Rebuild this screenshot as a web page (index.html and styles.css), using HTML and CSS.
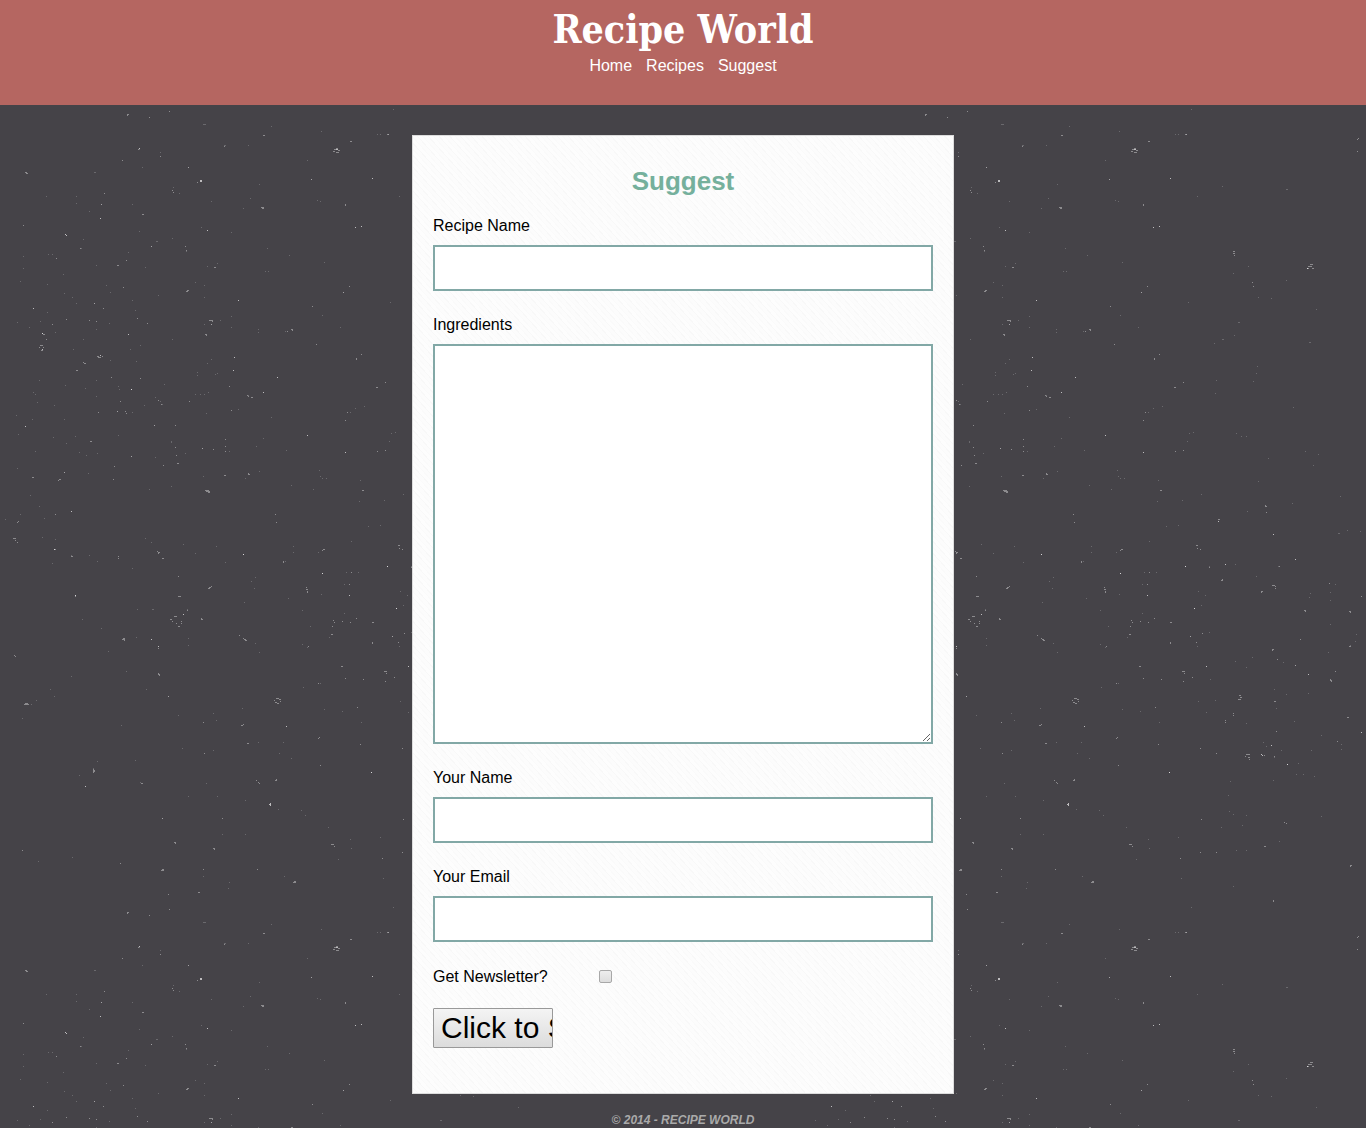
FILE: index.html
```html
<!DOCTYPE html>
<html lang="en">
<head>
<meta charset="utf-8">
<title>Recipe World - Suggest</title>
<link rel="stylesheet" href="styles.css">
</head>
<body>
<header class="site-header">
  <h1 class="logo">Recipe World</h1>
  <nav class="site-nav">
    <a href="#home">Home</a>
    <a href="#recipes">Recipes</a>
    <a href="#suggest">Suggest</a>
  </nav>
</header>
<main class="card">
  <h2 class="card-title">Suggest</h2>
  <form class="suggest-form">
    <div class="field">
      <label for="recipe">Recipe Name</label>
      <input class="box" type="text" id="recipe">
    </div>
    <div class="field">
      <label for="ingredients">Ingredients</label>
      <textarea class="box box-tall" id="ingredients"></textarea>
    </div>
    <div class="field">
      <label for="name">Your Name</label>
      <input class="box" type="text" id="name">
    </div>
    <div class="field">
      <label for="email">Your Email</label>
      <input class="box" type="email" id="email">
    </div>
    <div class="check-row">
      <label for="newsletter">Get Newsletter?</label>
      <input class="check" type="checkbox" id="newsletter">
    </div>
    <button class="submit" type="submit">Click to Submit</button>
  </form>
</main>
<footer class="site-footer">© 2014 - RECIPE WORLD</footer>
</body>
</html>
```
FILE: styles.css
```css
* { box-sizing: border-box; }

/* The page background is a 798px tile of dust specks: faint, medium and bright. */
body {
  margin: 0;
  font-family: Arial, "Liberation Sans", sans-serif;
  font-size: 16px;
  line-height: 18px;
  color: #000;
  background: #454348 url("data:image/svg+xml,%3Csvg xmlns='http://www.w3.org/2000/svg' width='798' height='798'%3E%3Cg fill='none' stroke='%23fff' transform='translate(0 .5)'%3E%3Cpath stroke-opacity='.2' d='M203 124h3M224 145h2M139 149h1M142 167h1M160 152h1M188 167h1M94 172h2M248 145h1M271 126h1M321 131h1M311 179h1M259 184h1M173 187h1M179 193h1M46 196h1M76 196h1M76 203h1M101 204h1M132 204h1M89 211h1M211 201h1M243 208h1M250 198h1M320 201h1M201 227h1M231 232h1M139 231h1M172 238h1M83 239h1M81 248h1M48 254h1M52 254h1M128 252h1M151 246h1M186 251h1M157 241h1M156 241h1M267 248h1M265 271h1M324 262h1M289 255h1M23 256h1M23 268h1M63 274h1M20 281h1M47 284h1M96 265h1M145 267h1M207 266h1M217 263h1M195 282h1M204 285h1M106 285h1M110 292h1M64 293h1M72 297h1M76 303h1M94 303h1M132 300h1M135 310h1M158 295h1M204 297h1M268 271h1M322 315h1M343 292h1M17 322h1M29 327h1M47 312h1M40 321h1M55 332h1M96 329h1M109 323h1M204 324h1M211 324h1M220 320h1M231 316h1M231 327h1M258 329h1M258 332h1M285 331h1M340 327h1M172 339h1M83 339h1M73 349h1M130 349h1M140 345h1M110 360h1M136 361h1M211 359h1M207 363h1M197 372h1M197 375h1M215 374h1M217 373h1M164 384h1M39 380h1M96 380h1M118 386h1M119 389h1M65 385h1M85 388h1M96 396h1M33 392h1M35 394h1M37 402h1M54 405h1M64 419h1M16 415h1M32 419h1M155 397h1M160 401h1M200 394h1M195 394h1M204 394h1M208 392h1M248 395h1M162 404h1M132 412h1M117 411h1M144 405h1M206 413h1M238 409h1M154 425h1M171 442h1M53 437h1M75 436h1M18 434h1M35 451h1M66 443h1M79 452h1M86 455h1M97 453h1M118 435h1M131 456h1M155 457h1M171 441h1M185 453h1M202 448h1M271 417h1M263 438h1M256 446h1M229 451h1M286 450h1M355 408h1M364 406h1M389 441h1M391 433h1M395 432h1M319 470h1M320 476h1M322 478h1M326 478h1M360 480h1M291 485h1M313 489h1M259 471h1M245 478h1M203 476h1M171 486h1M149 489h1M88 473h1M64 472h1M17 468h1M30 495h1M39 506h1M20 514h1M5 519h1M44 518h1M42 537h1M55 539h1M71 555h1M89 555h1M97 561h1M52 563h1M132 568h1M145 538h1M151 542h1M183 544h1M195 553h1M216 546h1M225 562h1M251 581h1M254 588h1M255 577h1M244 602h1M285 561h1M293 546h1M288 598h1M293 552h1M359 501h1M368 526h1M351 541h1M380 525h1M318 552h1M346 572h1M358 572h1M344 584h1M344 613h1M302 610h1M321 594h1M310 626h1M307 647h1M329 637h1M302 644h1M259 652h1M255 643h1M188 645h1M188 638h1M152 609h1M153 609h1M187 609h1M137 609h1M82 619h1M101 628h1M108 651h1M136 637h1M126 671h1M71 676h1M50 689h1M54 696h1M36 700h1M31 704h1M22 718h1M121 725h1M168 696h1M146 689h1M178 715h1M213 713h1M216 720h1M242 708h1M303 687h1M320 683h1M324 709h1M342 711h1M361 722h1M283 742h1M279 753h1M291 758h1M258 742h1M213 750h1M182 748h1M135 760h1M97 761h1M79 775h1M93 768h1M140 782h1M206 783h1M188 796h1M217 796h1M245 2h1M278 11h1M301 12h1M305 17h1M245 36h1M222 36h1M162 20h1M38 63h1M72 59h1M284 78h1M203 78h1M229 84h1M228 90h1M383 80h1M351 50h1M350 41h1M338 61h1M328 29h1M380 39h1M438 52h1M444 27h1M435 88h1M393 109h1M380 134h1M377 134h1M388 134h1M307 160h1M424 186h1M399 196h1M488 189h2M317 200h1M435 273h1M450 266h1M488 280h1M518 309h1M460 297h1M473 298h1M390 302h1M440 322h2M436 335h1M416 343h1M424 339h2M511 342h2M459 366h1M458 373h1M350 412h1M418 380h1M417 393h1M495 407h1M455 381h1M507 451h1M520 454h1M515 465h1M470 458h1M460 481h1M443 436h1M448 436h1M438 433h1M403 494h1M384 500h1M542 496h1M540 533h2M549 530h1M562 531h1M449 511h1M494 503h1M411 566h1M437 564h1M480 566h1M458 576h1M400 591h1M403 605h1M407 595h1M512 593h1M532 592h1M532 600h1M537 584h1M511 597h1M392 636h1M399 646h1M411 632h1M437 661h1M448 667h1M454 657h1M485 662h1M497 665h1M532 624h1M552 645h1M557 641h1M558 634h1M530 652h1M412 679h1M417 700h1M400 701h1M476 689h1M488 694h1M478 708h1M510 693h1M408 712h1M496 721h1M448 723h1M465 742h1M468 746h1M476 757h1M483 750h1M513 750h1M500 763h1M523 735h1M543 749h1M543 744h1M516 776h1M498 774h1M505 774h1M475 780h1M432 781h1M430 795h1M431 13h1M435 16h1M448 17h1M423 29h1M448 52h1M481 43h1M523 18h1'/%3E%3Cpath stroke-opacity='.38' d='M127 114h2M127 115h1M149 117h1M169 111h1M263 135h2M224 146h1M350 141h2M387 134h2M138 149h1M160 156h1M25 172h2M26 173h2M188 167h1M172 190h1M173 192h1M197 182h1M104 193h1M101 204h1M142 214h2M23 225h1M262 208h2M261 207h3M345 204h1M345 205h1M311 179h1M80 248h1M56 258h1M117 265h2M126 260h1M122 160h1M151 246h1M185 246h1M186 250h1M123 287h1M187 290h2M186 291h2M214 267h2M349 286h1M343 292h1M312 306h1M94 303h1M103 308h1M89 320h1M96 321h1M66 319h1M52 324h1M43 334h2M42 333h1M46 339h1M137 318h1M147 323h1M209 320h4M212 321h1M211 324h1M205 334h2M206 335h1M292 330h1M287 331h1M291 329h2M316 344h1M361 354h1M356 358h1M356 359h1M84 363h2M83 362h1M76 370h2M111 377h1M140 378h1M229 386h1M131 389h1M120 401h1M158 400h1M161 404h1M189 401h1M231 410h1M247 395h1M248 396h1M251 397h2M125 411h1M126 413h1M117 411h1M98 412h1M175 425h1M154 425h1M90 441h2M175 447h1M176 455h1M177 463h1M178 463h1M163 465h1M225 439h1M225 446h1M225 451h1M213 449h1M202 448h1M347 412h1M345 420h1M376 387h2M385 382h1M377 451h1M385 450h1M131 456h1M114 466h1M113 479h1M32 477h2M59 479h2M58 480h1M64 472h1M224 475h2M248 473h1M248 474h2M205 490h4M206 491h4M208 492h2M362 490h2M17 522h1M18 521h1M13 538h3M15 540h1M17 542h1M54 549h2M71 556h2M118 556h1M118 558h1M55 514h1M158 552h2M157 551h1M158 553h1M162 558h2M276 522h1M275 514h1M178 576h1M209 587h2M211 586h1M208 588h2M178 596h3M187 610h1M75 595h1M75 596h1M170 619h2M172 621h1M174 616h3M181 621h1M181 623h1M178 626h2M176 623h1M201 619h2M201 618h1M123 638h2M122 639h3M124 640h1M239 635h1M244 639h2M245 640h2M243 638h1M158 648h1M158 674h2M158 673h1M159 675h1M168 696h1M14 655h1M15 656h1M25 703h3M24 704h5M276 698h3M274 700h1M275 702h2M279 699h2M280 701h1M277 703h2M243 554h1M283 561h1M283 562h1M323 549h2M322 550h1M306 587h1M306 589h2M307 591h1M307 592h1M322 573h1M351 572h1M349 584h1M333 620h1M334 622h1M332 626h1M331 634h2M342 621h1M350 622h1M372 622h1M356 618h1M372 643h1M308 646h1M341 666h2M384 671h3M386 673h1M385 681h1M394 677h1M363 679h1M318 683h1M345 678h1M357 707h1M318 738h1M319 737h1M360 744h1M241 725h2M243 724h1M203 722h1M204 753h1M247 743h2M93 769h1M93 770h2M93 771h2M93 772h1M141 783h2M256 780h1M258 782h1M259 783h1M275 780h2M276 779h1M320 765h1M371 772h1M162 20h1M222 20h1M174 44h2M175 45h1M213 50h2M214 51h1M120 65h1M162 71h2M161 72h3M203 71h1M257 71h1M294 83h2M293 84h3M198 94h2M168 96h1M22 52h1M331 46h3M334 48h1M382 60h1M403 21h1M402 54h1M418 54h1M466 48h2M486 24h1M488 25h1M475 103h1M560 138h1M552 67h2M552 68h1M475 102h1M559 139h1M559 151h1M435 251h2M435 253h2M436 255h1M454 282h1M455 286h1M512 264h3M510 266h4M509 268h2M514 268h2M420 519h2M467 505h1M467 506h2M468 512h1M398 545h2M399 548h1M402 549h1M387 566h1M411 567h1M481 566h1M423 580h2M424 579h1M474 585h3M477 586h1M477 588h1M463 591h2M463 592h1M531 583h1M506 610h2M507 611h1M551 611h2M552 612h1M563 596h1M396 608h1M392 636h1M398 642h1M372 642h1M373 622h1M404 633h1M502 639h1M474 649h2M474 650h1M479 659h1M497 665h1M551 646h2M537 671h1M532 679h1M532 680h2M533 681h1M441 695h2M442 697h2M440 699h3M435 713h1M435 715h1M427 720h1M427 722h1M476 701h2M549 717h2M478 731h1M539 741h1M448 754h4M447 756h1M450 757h2M451 759h1M466 755h1M476 756h1M489 764h1M402 748h1M418 753h1M336 148h2M334 149h2M338 150h2M333 151h2M336 152h3M40 345h3M39 347h1M43 347h1M41 350h2M97 356h2M102 356h1M98 357h3'/%3E%3Cpath stroke-opacity='.65' d='M139 148h1M200 180h2M200 181h2M372 178h1M336 149h2M100 355h1M42 349h1M128 334h1M42 333h1M238 300h1M207 230h1M65 234h1M66 235h1M33 308h1M100 218h1M277 377h1M233 370h1M234 357h1M263 392h1M131 389h1M25 426h1M345 452h1M307 435h1M355 227h1M361 226h1M71 511h1M54 549h1M75 595h1M151 639h1M158 646h1M183 614h1M243 554h1M322 573h1M349 595h1M387 566h1M85 786h1M286 726h1M270 803h1M269 6h2M270 5h1M270 7h1M371 772h1M420 521h1M427 564h1M497 559h1M475 534h1M396 608h1M408 666h1M464 755h1M463 754h1M563 732h1M473 745h1M489 764h1M510 674h1M509 268h1'/%3E%3C/g%3E%3C/svg%3E");
}

.site-header {
  padding: 5px 0 30px;
  background: #b56661;
  color: #fff;
  text-align: center;
}

.logo {
  margin: 0 0 3px;
  font-family: "DejaVu Serif Condensed", "DejaVu Serif", serif;
  font-size: 39px;
  line-height: 48px;
}

.site-nav {
  display: flex;
  justify-content: center;
  gap: 14px;
  line-height: 19px;
}

.site-nav a { color: #fff; text-decoration: none; }

.card {
  width: 542px;
  max-width: 100%;
  margin: 30px auto 18px;
  padding: 30px 20px 45px;
  border: 1px solid #ddd;
  background: repeating-linear-gradient(48deg, #fcfcfc 0 3px, #f8f8f8 3px 4px, #fdfdfd 4px 7px, #fafafa 7px 8px);
}

.card-title {
  margin: 0 0 21px;
  color: #75b09c;
  font-size: 26px;
  line-height: 30px;
  text-align: center;
}

.field {
  display: flex;
  flex-direction: column;
  gap: 10px;
  margin-bottom: 25px;
}

.box {
  width: 100%;
  height: 46px;
  margin: 0;
  padding: 4px;
  border: 2px solid #82a8a6;
  background: #fff;
  font-size: 16px;
}

.box-tall { height: 400px; resize: vertical; }

.check-row {
  display: flex;
  gap: 51px;
  padding-top: 1px;
  margin-bottom: 22px;
}

.check {
  appearance: none;
  width: 13px;
  height: 13px;
  margin: 2px 0 0;
  border: 1px solid #a8a8a8;
  border-radius: 2px;
  background: linear-gradient(#eee, #ddd);
}

.submit {
  display: block;
  width: 120px;
  height: 40px;
  padding: 1px 7px;
  border: 1px solid #999;
  border-radius: 1px;
  overflow: hidden;
  background: linear-gradient(#f4f4f4, #dcdcdc);
  color: #000;
  font-family: inherit;
  font-size: 30px;
  line-height: 34px;
  text-align: left;
  white-space: nowrap;
}

.site-footer {
  color: #aaa;
  font-size: 12px;
  font-style: italic;
  font-weight: bold;
  line-height: 16px;
  text-align: center;
}
```
